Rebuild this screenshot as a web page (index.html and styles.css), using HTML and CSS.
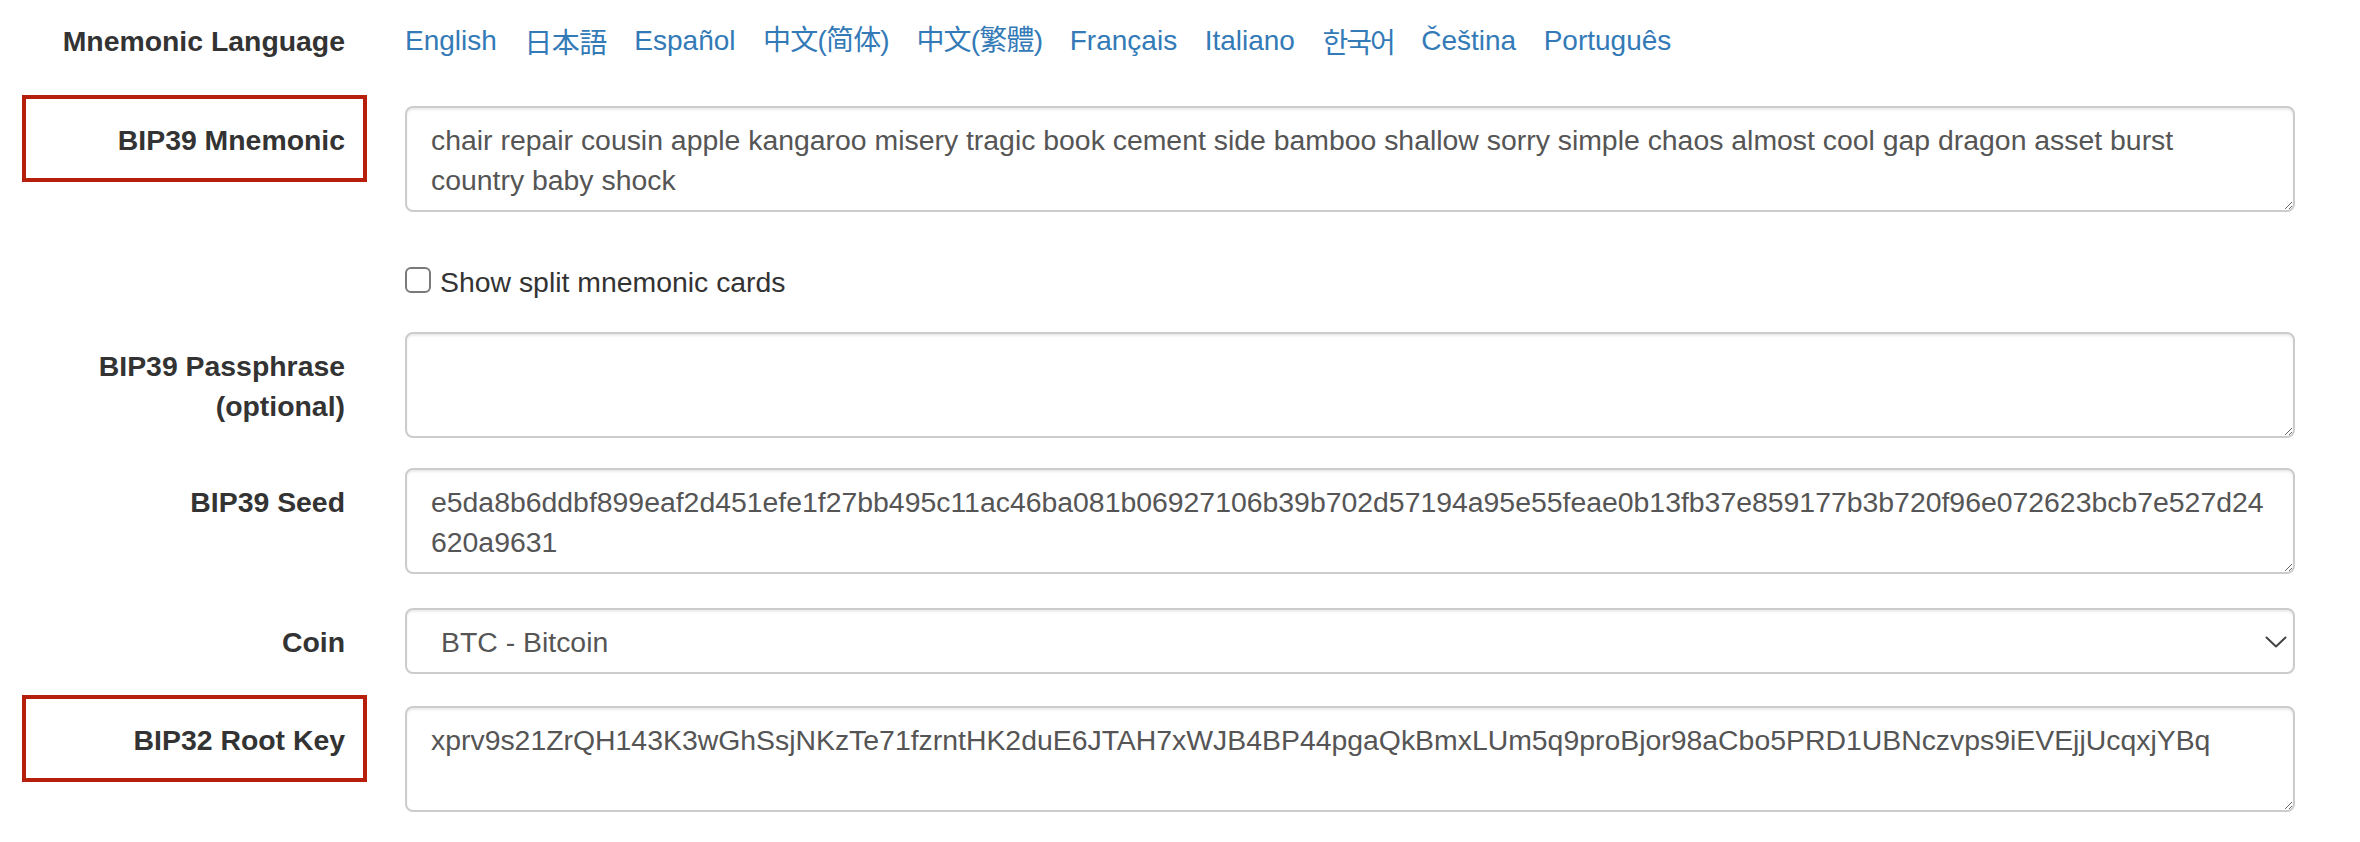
FILE: index.html
```html
<!DOCTYPE html>
<html lang="en">
<head>
<meta charset="utf-8">
<title>BIP39 Mnemonic</title>
<link rel="stylesheet" href="styles.css">
</head>
<body>
<form class="form">
  <div class="group group-lang">
    <div class="label">Mnemonic Language</div>
    <div class="control languages">
      <a href="#english">English</a>
      <a href="#japanese" lang="ja">日本語</a>
      <a href="#spanish">Español</a>
      <a href="#chinese_simplified" lang="zh-CN">中文(简体)</a>
      <a href="#chinese_traditional" lang="zh-TW">中文(繁體)</a>
      <a href="#french">Français</a>
      <a href="#italian">Italiano</a>
      <a href="#korean" lang="ko">한국어</a>
      <a href="#czech">Čeština</a>
      <a href="#portuguese">Português</a>
    </div>
  </div>

  <div class="group">
    <label class="label marked" for="phrase">BIP39 Mnemonic</label>
    <div class="control">
      <textarea id="phrase" class="field" rows="2">chair repair cousin apple kangaroo misery tragic book cement side bamboo shallow sorry simple chaos almost cool gap dragon asset burst country baby shock</textarea>
    </div>
  </div>

  <div class="group group-check">
    <div class="label"></div>
    <div class="control">
      <label class="check"><input type="checkbox" class="checkbox"> Show split mnemonic cards</label>
    </div>
  </div>

  <div class="group">
    <label class="label" for="passphrase">BIP39 Passphrase<br>(optional)</label>
    <div class="control">
      <textarea id="passphrase" class="field" rows="2"></textarea>
    </div>
  </div>

  <div class="group group-seed">
    <label class="label" for="seed">BIP39 Seed</label>
    <div class="control">
      <textarea id="seed" class="field field-seed" rows="2" readonly>e5da8b6ddbf899eaf2d451efe1f27bb495c11ac46ba081b06927106b39b702d57194a95e55feae0b13fb37e859177b3b720f96e072623bcb7e527d24620a9631</textarea>
    </div>
  </div>

  <div class="group group-coin">
    <label class="label" for="coin">Coin</label>
    <div class="control select-wrap">
      <select id="coin" class="field select">
        <option>BTC - Bitcoin</option>
      </select>
      <svg class="chevron" width="22" height="12" viewBox="0 0 22 12" aria-hidden="true">
        <path d="M1.5 1.5 L11 10.5 L20.5 1.5" fill="none" stroke="#444" stroke-width="2" stroke-linecap="round" stroke-linejoin="round"/>
      </svg>
    </div>
  </div>

  <div class="group">
    <label class="label marked" for="root-key">BIP32 Root Key</label>
    <div class="control">
      <textarea id="root-key" class="field" rows="2" readonly>xprv9s21ZrQH143K3wGhSsjNKzTe71fzrntHK2duE6JTAH7xWJB4BP44pgaQkBmxLUm5q9proBjor98aCbo5PRD1UBNczvps9iEVEjjUcqxjYBq</textarea>
    </div>
  </div>
</form>
</body>
</html>
```

FILE: styles.css
```css
*,
*::before,
*::after {
  box-sizing: border-box;
}

html, body {
  margin: 0;
  padding: 0;
  background: #fff;
}

body {
  font-family: "Liberation Sans", Arial, "Noto Sans CJK SC", sans-serif;
  font-size: 28.4px;
  line-height: 40px;
  color: #333;
}

.form {
  padding-top: 7px;
}

.group {
  display: grid;
  grid-template-columns: 345px 1fr;
  column-gap: 60px;
  padding-right: 65px;
  margin-bottom: 30px;
}

.group-lang {
  margin-bottom: 45px;
}

.group-seed {
  margin-bottom: 34px;
}

.group-coin {
  margin-bottom: 32px;
}

.label {
  position: relative;
  display: block;
  text-align: right;
  font-weight: bold;
  padding-top: 14px;
  color: #333;
}

.marked::after {
  content: "";
  position: absolute;
  left: 22px;
  right: -22px;
  top: -11px;
  height: 87px;
  border: 4px solid #b51f0b;
}

.control {
  min-width: 0;
}

.languages {
  display: flex;
  flex-wrap: wrap;
  column-gap: 27.5px;
  padding-top: 14px;
  font-size: 28px;
}

.languages a {
  color: #337ab7;
  text-decoration: none;
}

.languages a:lang(ja) {
  font-family: "Noto Sans CJK JP", sans-serif;
  letter-spacing: -0.5px;
}

.languages a:lang(zh-CN) {
  font-family: "Liberation Sans", "Noto Sans CJK SC", sans-serif;
  letter-spacing: -0.8px;
}

.languages a:lang(zh-TW) {
  font-family: "Liberation Sans", "Noto Sans CJK TC", sans-serif;
  letter-spacing: -0.8px;
}

.languages a:lang(ko) {
  font-family: "Noto Sans CJK KR", sans-serif;
  letter-spacing: -2px;
}

.field {
  display: block;
  width: 100%;
  margin: 0;
  height: 106px;
  padding: 12px 24px;
  font-family: "Liberation Sans", Arial, sans-serif;
  font-size: 28.4px;
  line-height: 40px;
  color: #555;
  background: #fff;
  border: 2px solid #ccc;
  border-radius: 8px;
  box-shadow: inset 0 2px 2px rgba(0, 0, 0, 0.075);
  resize: vertical;
  overflow: hidden;
  outline: none;
}

.field-seed {
  padding-right: 20px;
}

.group-check .control {
  padding-top: 20px;
  min-height: 60px;
}

.check {
  display: flex;
  align-items: center;
  gap: 9px;
  font-weight: normal;
  color: #333;
}

.checkbox {
  appearance: none;
  -webkit-appearance: none;
  width: 26px;
  height: 26px;
  margin: 0;
  border: 2px solid #7a7a7a;
  border-radius: 6px;
  background: #fff;
  flex: none;
  position: relative;
  top: -2px;
}

.select-wrap {
  position: relative;
}

.select {
  appearance: none;
  -webkit-appearance: none;
  height: 66px;
  padding: 12px 60px 12px 34px;
  resize: none;
}

.chevron {
  position: absolute;
  right: 8px;
  top: 28px;
  pointer-events: none;
}
```
